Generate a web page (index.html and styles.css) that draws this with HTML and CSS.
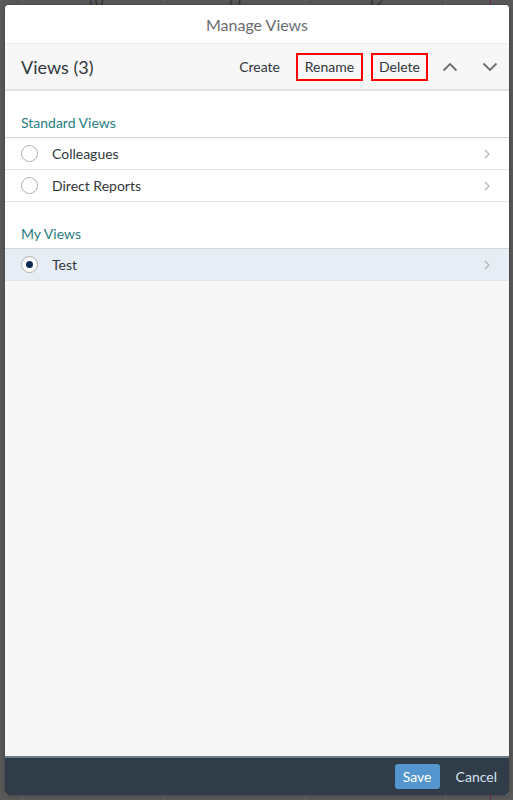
FILE: index.html
```html
<!DOCTYPE html>
<html lang="en">
<head>
    <meta charset="UTF-8">
    <title>Manage Views</title>
    <link rel="stylesheet" href="styles.css">
</head>
<body>
    <div class="backdrop">
        <span class="day d10">10</span>
        <span class="day d11">11</span>
        <span class="day d12">12</span>
    </div>
    <div class="dialog">
        <div class="title">Manage Views</div>
        <div class="toolbar">
            <span class="count">Views (3)</span>
            <div class="actions">
                <button class="act">Create</button>
                <button class="act boxed rename">Rename</button>
                <button class="act boxed delete">Delete</button>
                <button class="icon">
                    <svg width="16" height="10" viewBox="0 0 16 10"><path d="M1.5 8.5 L8 2 L14.5 8.5" fill="none" stroke="#6a6d70" stroke-width="1.8"/></svg>
                </button>
                <button class="icon">
                    <svg width="16" height="10" viewBox="0 0 16 10"><path d="M1.5 1.5 L8 8 L14.5 1.5" fill="none" stroke="#6a6d70" stroke-width="1.8"/></svg>
                </button>
            </div>
        </div>
        <div class="content">
            <div class="group">
                <div class="group-head">Standard Views</div>
                <ul class="list">
                    <li class="row"><span class="radio"></span><span class="label">Colleagues</span><svg class="chev" width="6" height="10" viewBox="0 0 6 10"><path d="M1 1 L5 5 L1 9" fill="none" stroke="#b3b3b3" stroke-width="1.2"/></svg></li>
                    <li class="row"><span class="radio"></span><span class="label">Direct Reports</span><svg class="chev" width="6" height="10" viewBox="0 0 6 10"><path d="M1 1 L5 5 L1 9" fill="none" stroke="#b3b3b3" stroke-width="1.2"/></svg></li>
                </ul>
                <div class="group-head">My Views</div>
                <ul class="list">
                    <li class="row selected"><span class="radio on"></span><span class="label">Test</span><svg class="chev" width="6" height="10" viewBox="0 0 6 10"><path d="M1 1 L5 5 L1 9" fill="none" stroke="#b3b3b3" stroke-width="1.2"/></svg></li>
                </ul>
            </div>
        </div>
        <div class="footer">
            <button class="save">Save</button>
            <button class="cancel">Cancel</button>
        </div>
    </div>
</body>
</html>
```

FILE: styles.css
```css
* { box-sizing: border-box; }
html, body { margin: 0; height: 800px; }
body {
    font-family: Lato, "Open Sans", Arial, sans-serif;
    background: #595959;
    padding: 5px;
    position: relative;
    overflow: hidden;
}
.backdrop {
    position: absolute;
    inset: 0;
    background:
        linear-gradient(90deg, transparent 22px, #666 22px, #666 23px, transparent 23px),
        linear-gradient(90deg, transparent 163px, #666 163px, #666 164px, transparent 164px),
        linear-gradient(90deg, transparent 305px, #666 305px, #666 306px, transparent 306px),
        linear-gradient(90deg, transparent 445px, #666 445px, #666 446px, transparent 446px),
        linear-gradient(90deg, transparent 490px, #6b2a5e 490px, #6b2a5e 491px, transparent 491px);
}
.day { position: absolute; top: -9px; color: #333; font-size: 15px; }
.d10 { left: 86px; }
.d11 { left: 226px; }
.d12 { left: 367px; }

.dialog {
    position: relative;
    width: 504px;
    height: 790px;
    background: #f7f7f7;
    border-radius: 4px;
    overflow: hidden;
    display: flex;
    flex-direction: column;
    box-shadow: 0 0 4px rgba(0,0,0,0.3);
}
.title {
    height: 39px;
    background: #fff;
    color: #6a6d70;
    font-size: 16px;
    display: flex;
    align-items: center;
    justify-content: center;
    border-bottom: 1px solid #eee;
}
.toolbar {
    height: 47px;
    background: #f7f7f7;
    border-bottom: 2px solid #e2e2e2;
    display: flex;
    align-items: center;
    padding: 0 3px 0 16px;
}
.count { font-size: 18px; color: #32363a; flex: 1; }
.actions { display: flex; align-items: center; gap: 8px; }
button { font-family: inherit; background: none; border: none; cursor: pointer; padding: 0; }
.act { font-size: 14px; color: #32363a; height: 28px; padding: 0 8px; }
.boxed { border: 2px solid #ff0000; padding: 0 6px; }
.rename { width: 67px; }
.delete { width: 57px; margin-right: -2px; }
.icon { width: 32px; height: 28px; display: flex; align-items: center; justify-content: center; }

.content { flex: 1; background: #f7f7f7; }
.group { background: #fff; }
.group-head {
    height: 47px;
    padding: 0 16px 6px;
    display: flex;
    align-items: flex-end;
    color: #2b7c80;
    font-size: 14px;
    border-bottom: 1px solid #d4d4d4;
}
.list { list-style: none; margin: 0; padding: 0; }
.row {
    height: 32px;
    display: flex;
    align-items: center;
    padding: 0 19px 0 16px;
    border-bottom: 1px solid #e5e5e5;
    font-size: 14px;
    color: #32363a;
}
.row.selected { background: #e6edf4; }
.radio {
    width: 17px;
    height: 17px;
    border-radius: 50%;
    border: 1.5px solid #b0b0b0;
    background: #fff;
    margin-right: 14px;
    display: flex;
    align-items: center;
    justify-content: center;
}
.radio.on::after {
    content: "";
    width: 7px;
    height: 7px;
    border-radius: 50%;
    background: #0b2d52;
}
.label { flex: 1; }

.footer {
    height: 39px;
    background: #303c48;
    border-top: 2px solid #6b7885;
    display: flex;
    align-items: center;
    justify-content: flex-end;
    padding: 0 12px 0 0;
    gap: 16px;
}
.save {
    background: #5496cd;
    color: #fff;
    font-size: 14px;
    width: 45px;
    height: 25px;
    border-radius: 3px;
}
.cancel { color: #d3e3f1; font-size: 14px; }
```
